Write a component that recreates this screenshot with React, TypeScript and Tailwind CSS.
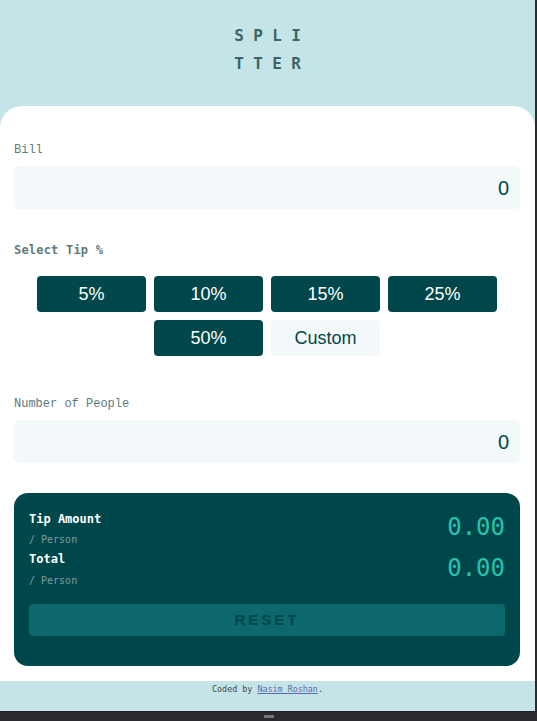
import React from "react";

const mono = { fontFamily: '"Liberation Mono", "Courier New", monospace' };
const dmono = { fontFamily: '"DejaVu Sans Mono", "Liberation Mono", monospace' };
const sans = { fontFamily: '"Liberation Sans", Arial, sans-serif' };

function Tip({ label, active = true }: { label: string; active?: boolean }) {
  return (
    <button
      className={
        "w-[109px] h-[36px] rounded-[4px] text-[18px] leading-none flex items-center justify-center " +
        (active ? "bg-[#00474b] text-white" : "bg-[#f3f8fb] text-[#00474b]")
      }
      style={sans}
    >
      {label}
    </button>
  );
}

function Field({ label, top }: { label: string; top: string }) {
  return (
    <div className={top}>
      <div className="text-[12px] leading-[16px] text-[#5e7a7d] mb-[8px]" style={mono}>
        {label}
      </div>
      <div
        className="h-[43px] rounded-[5px] bg-[#f3f8fb] flex items-center justify-end pr-[11px] text-[20px] text-[#00474b]"
        style={sans}
      >
        0
      </div>
    </div>
  );
}

export default function App() {
  return (
    <div className="w-[537px] h-[721px] flex flex-col bg-[#2a2a2e] overflow-hidden">
      <div className="flex flex-row h-[711px]">
        <div className="w-[535px] flex flex-col bg-[#c5e4e7]">
          <div className="h-[106px] pt-[22px] flex flex-col items-center">
            <div
              className="text-[16px] leading-[28px] font-bold tracking-[9.4px] pl-[9.4px] text-[#3d6565] text-center"
              style={dmono}
            >
              <div>SPLI</div>
              <div>TTER</div>
            </div>
          </div>
          <div className="bg-white rounded-t-[22px] pl-[14px] pr-[15px] pt-[36px] pb-[15px]">
            <Field label="Bill" top="" />
            <div className="mt-[33px]">
              <div
                className="text-[12px] leading-[16px] font-bold text-[#5e7a7d] mb-[18px] tracking-[0.2px]"
                style={dmono}
              >
                Select Tip %
              </div>
              <div className="flex flex-wrap justify-center gap-[8px]">
                <Tip label="5%" />
                <Tip label="10%" />
                <Tip label="15%" />
                <Tip label="25%" />
                <Tip label="50%" />
                <Tip label="Custom" active={false} />
              </div>
            </div>
            <Field label="Number of People" top="mt-[40px]" />
            <div className="mt-[30px] bg-[#00474b] rounded-[14px] px-[15px] pt-[18px] pb-[30px]">
              <div className="flex items-center justify-between">
                <div>
                  <div className="text-[12px] leading-[16px] font-bold text-white" style={dmono}>
                    Tip Amount
                  </div>
                  <div className="mt-[6px] text-[10px] leading-[14px] text-[#7f9d9f]" style={dmono}>
                    / Person
                  </div>
                </div>
                <div className="text-[24px] leading-[28px] text-[#26c2ae] mb-[5px]" style={dmono}>
                  0.00
                </div>
              </div>
              <div className="mt-[4px] flex items-center justify-between">
                <div>
                  <div className="text-[12px] leading-[16px] font-bold text-white" style={dmono}>
                    Total
                  </div>
                  <div className="mt-[7px] text-[10px] leading-[14px] text-[#7f9d9f]" style={dmono}>
                    / Person
                  </div>
                </div>
                <div className="text-[24px] leading-[28px] text-[#26c2ae] mb-[3px]" style={dmono}>
                  0.00
                </div>
              </div>
              <button
                className="mt-[16px] w-full h-[32px] rounded-[4px] bg-[#0d686d] text-[#00474b] font-bold text-[15px] tracking-[3px] flex items-center justify-center"
                style={sans}
              >
                RESET
              </button>
            </div>
          </div>
          <div className="flex-1 flex justify-center pt-[1px]">
            <div className="text-[8.4px] leading-[14px] text-[#3d4a4a]" style={dmono}>
              Coded by{" "}
              <a href="#" className="underline text-[#5a6bb0]">
                Nasim Roshan
              </a>
              .
            </div>
          </div>
        </div>
        <div className="w-[2px] bg-[#2a2a2e]" />
      </div>
      <div className="h-[10px] flex justify-center items-center border-t border-[#1f1f22]">
        <div className="w-[10px] h-[3px] bg-[#77777b]" />
      </div>
    </div>
  );
}
